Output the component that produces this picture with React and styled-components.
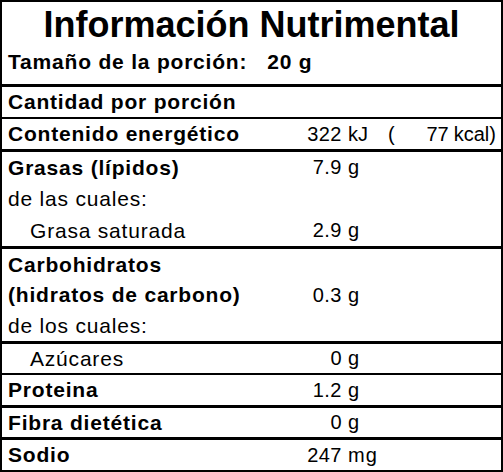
import React from "react"
import styled, { createGlobalStyle } from "styled-components"

const GlobalStyle = createGlobalStyle`
  html, body {
    margin: 0;
    padding: 0;
    background: #ffffff;
  }
  body {
    font-family: "Liberation Sans", Arial, sans-serif;
    color: #000000;
  }
`

const Label = styled.div`
  width: 503px;
  height: 472px;
  box-sizing: border-box;
  border: 2px solid #000;
  display: flex;
  flex-direction: column;
  overflow: hidden;
`

const Header = styled.div`
  padding-bottom: 7px;
`

const Title = styled.h1`
  margin: 0;
  text-align: center;
  font-size: 36px;
  font-weight: bold;
  line-height: 45px;
`

const Serving = styled.div`
  display: flex;
  padding-left: 6px;
  font-size: 21px;
  font-weight: bold;
  letter-spacing: 0.8px;
  line-height: 30px;
`

const ServingAmount = styled.span`
  margin-left: 20px;
`

const Section = styled.div`
  border-top: ${p => p.$rule || 3}px solid #000;
`

const Line = styled.div`
  display: grid;
  grid-template-columns: 292px 42px 1fr;
  padding-left: 6px;
  height: ${p => p.$h || 30}px;
  align-items: center;
  line-height: ${p => p.$h || 30}px;
`

const Name = styled.span`
  font-size: 21px;
  font-weight: ${p => (p.$bold ? "bold" : "normal")};
  letter-spacing: 0.8px;
  padding-left: ${p => (p.$indent ? 22 : 0)}px;
  white-space: nowrap;
`

const Amount = styled.span`
  font-size: 20px;
  text-align: right;
  letter-spacing: 0.5px;
  white-space: nowrap;
`

const Unit = styled.span`
  font-size: 20px;
  padding-left: 6px;
  letter-spacing: 1px;
  white-space: nowrap;
`

const Energy = styled.span`
  display: flex;
  font-size: 20px;
  padding-left: 6px;
  white-space: nowrap;
`

const Paren = styled.span`
  margin-left: 20px;
`

const Kcal = styled.span`
  width: 54px;
  text-align: right;
`

const KcalUnit = styled.span`
  margin-left: 5px;
`

function Row({ name, bold, indent, amount, unit, h }) {
  return (
    <Line $h={h}>
      <Name $bold={bold} $indent={indent}>{name}</Name>
      <Amount>{amount}</Amount>
      {unit ? <Unit>{unit}</Unit> : <span />}
    </Line>
  )
}

export default function App() {
  return (
    <>
      <GlobalStyle />
      <Label>
        <Header>
          <Title>Información Nutrimental</Title>
          <Serving>
            Tamaño de la porción:<ServingAmount>20 g</ServingAmount>
          </Serving>
        </Header>
        <Section $rule={3}>
          <Row name="Cantidad por porción" bold h={30} />
        </Section>
        <Section $rule={2}>
          <Line $h={30}>
            <Name $bold>Contenido energético</Name>
            <Amount>322</Amount>
            <Energy>
              kJ
              <Paren>(</Paren>
              <Kcal>77</Kcal>
              <KcalUnit>kcal)</KcalUnit>
            </Energy>
          </Line>
        </Section>
        <Section $rule={3}>
          <Row name="Grasas (lípidos)" bold amount="7.9" unit="g" h={31} />
          <Row name="de las cuales:" h={32} />
          <Row name="Grasa saturada" indent amount="2.9" unit="g" h={31} />
        </Section>
        <Section $rule={3}>
          <Row name="Carbohidratos" bold h={31} />
          <Row name="(hidratos de carbono)" bold amount="0.3" unit="g" h={30} />
          <Row name="de los cuales:" h={31} />
        </Section>
        <Section $rule={3}>
          <Row name="Azúcares" indent amount="0" unit="g" h={29} />
        </Section>
        <Section $rule={2}>
          <Row name="Proteina" bold amount="1.2" unit="g" h={30} />
        </Section>
        <Section $rule={3}>
          <Row name="Fibra dietética" bold amount="0" unit="g" h={29} />
        </Section>
        <Section $rule={3}>
          <Row name="Sodio" bold amount="247" unit="mg" h={30} />
        </Section>
      </Label>
    </>
  )
}
